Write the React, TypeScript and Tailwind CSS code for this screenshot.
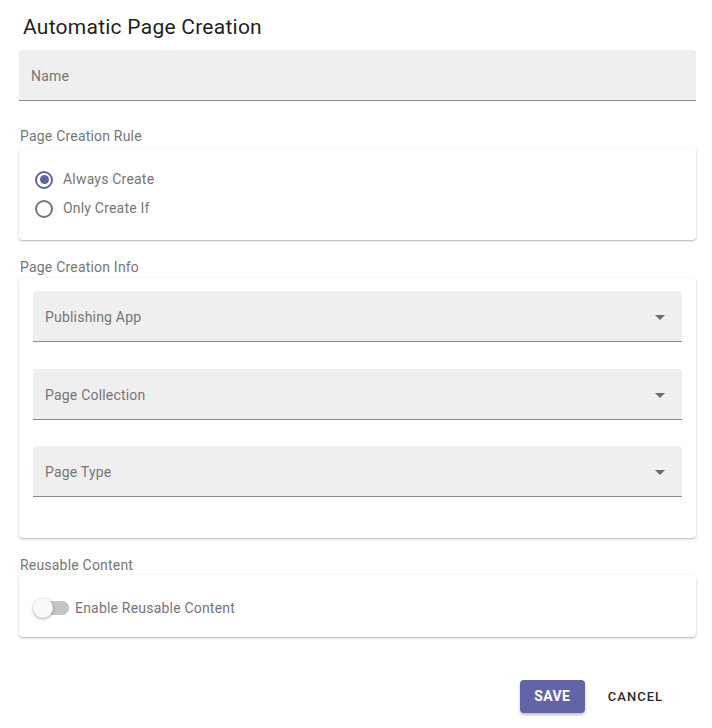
const FONT = "font-['Roboto',_'Liberation_Sans',_sans-serif]";

function Select({ label }: { label: string }) {
  return (
    <div className="flex h-[51px] items-center justify-between rounded-t border-b border-[#8a8a8a] bg-[#efefef] pl-3 pr-[17px] pt-[3px]">
      <span className="text-[14px] tracking-[0.2px] text-[#767676]">{label}</span>
      <svg viewBox="0 0 10 5" className="h-[5px] w-[10px] fill-[#6b6b6b]">
        <path d="M0 0h10L5 5z" />
      </svg>
    </div>
  );
}

function Radio({ label, checked }: { label: string; checked?: boolean }) {
  return (
    <label className="flex h-[29px] items-center gap-[10px]">
      <span
        className={
          "flex size-[18px] items-center justify-center rounded-full border-2 " +
          (checked ? "border-[#6264a7]" : "border-[#767676]")
        }
      >
        {checked && <span className="size-[9px] rounded-full bg-[#6264a7]" />}
      </span>
      <span className="text-[14px] tracking-[0.2px] text-[#767676]">{label}</span>
    </label>
  );
}

function SectionLabel({ children }: { children: string }) {
  return (
    <div className="h-5 pl-px text-[14px] leading-5 tracking-[0.2px] text-[#767676]">
      {children}
    </div>
  );
}

const card =
  "rounded bg-white shadow-[0_1px_3px_rgba(0,0,0,0.2),0_1px_1px_rgba(0,0,0,0.12)]";

export default function App() {
  return (
    <div className={"min-h-[728px] w-[712px] bg-white " + FONT}>
      <div className="pl-[19px] pr-4 pt-[13px]">
        <h1 className="h-[28px] pl-1 text-[21px] leading-[28px] tracking-[0.25px] text-[#1f1f1f]">
          Automatic Page Creation
        </h1>

        <div className="mt-[9px] flex h-[51px] items-center rounded-t border-b border-[#8a8a8a] bg-[#efefef] pl-3 pt-[2px]">
          <span className="text-[14px] tracking-[0.2px] text-[#767676]">Name</span>
        </div>

        <div className="mt-[25px]">
          <SectionLabel>Page Creation Rule</SectionLabel>
        </div>
        <div className={"mt-[2px] px-4 py-[17px] " + card}>
          <Radio label="Always Create" checked />
          <Radio label="Only Create If" />
        </div>

        <div className="mt-[17px]">
          <SectionLabel>Page Creation Info</SectionLabel>
        </div>
        <div className={"mt-px flex flex-col gap-[26.5px] px-[14px] pb-[41px] pt-[13px] " + card}>
          <Select label="Publishing App" />
          <Select label="Page Collection" />
          <Select label="Page Type" />
        </div>

        <div className="mt-[17px]">
          <SectionLabel>Reusable Content</SectionLabel>
        </div>
        <div className={"flex h-[62px] items-center px-[14px] pt-[4px] " + card}>
          <div className="relative h-5 w-[36px]">
            <span className="absolute left-[3px] top-[3px] h-[14px] w-[33px] rounded-full bg-[#c4c4c4]" />
            <span className="absolute left-0 top-0 size-5 rounded-full bg-[#fafafa] shadow-[0_1px_3px_rgba(0,0,0,0.35)]" />
          </div>
          <span className="ml-[6px] text-[14px] tracking-[0.2px] text-[#767676]">
            Enable Reusable Content
          </span>
        </div>

        <div className="mt-[43px] flex items-center justify-end gap-[23px] pr-[33px]">
          <button className="h-[33px] w-[65px] rounded bg-[#6264a7] text-[14px] font-bold tracking-[0.4px] text-white shadow-[0_2px_3px_rgba(0,0,0,0.25)]">
            SAVE
          </button>
          <button className="h-[33px] text-[13px] font-medium tracking-[1px] text-[#2b2b2b]">
            CANCEL
          </button>
        </div>
      </div>
    </div>
  );
}
